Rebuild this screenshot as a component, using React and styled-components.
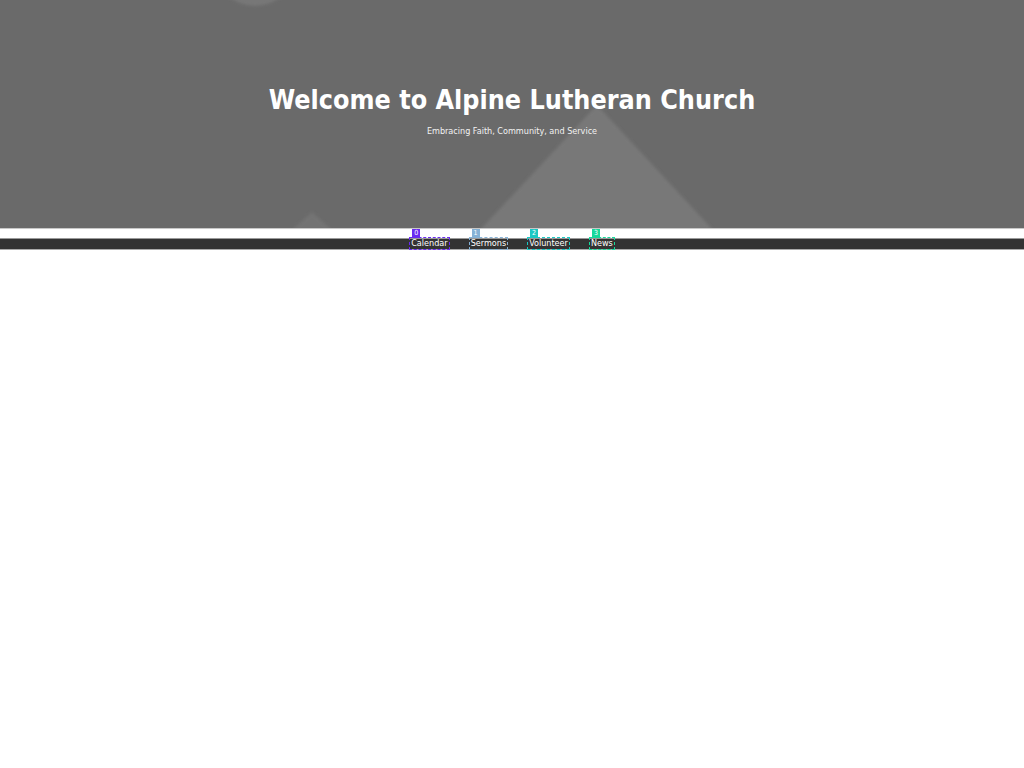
import React from "react";
import styled, { createGlobalStyle } from "styled-components";

const GlobalStyle = createGlobalStyle`
  html, body {
    margin: 0;
    padding: 0;
    background: #fff;
    font-family: "DejaVu Sans Condensed", "DejaVu Sans", sans-serif;
  }
`;

const Hero = styled.header`
  position: relative;
  height: 228px;
  background: #6a6a6a;
  overflow: hidden;
  display: flex;
  flex-direction: column;
  align-items: center;
  color: #fff;
`;

const HeroArt = styled.svg`
  position: absolute;
  inset: 0;
  width: 100%;
  height: 100%;
`;

const Title = styled.h1`
  position: relative;
  margin: 84px 0 0;
  font-size: 26.7px;
  font-weight: bold;
  line-height: 32px;
  font-stretch: condensed;
`;

const Subtitle = styled.p`
  position: relative;
  margin: 9px 0 0;
  font-size: 9px;
  line-height: 12px;
  color: #f2f2f2;
  font-stretch: condensed;
`;

const Spacer = styled.div`
  height: 9px;
  border-top: 1px solid #c8c8c8;
  background: #fff;
`;

const NavBar = styled.nav`
  height: 10px;
  background: #333;
  border-top: 1px solid #999;
  border-bottom: 1px solid #aaa;
  display: flex;
  justify-content: center;
  gap: 21px;
`;

const NavLink = styled.a`
  position: relative;
  display: block;
  height: 11px;
  padding: 0 1px;
  margin-top: -1px;
  color: #fff;
  text-decoration: none;
  font-size: 9px;
  line-height: 11px;
  font-stretch: condensed;
  outline: 1px dashed ${(p) => p.$mark};
`;

const Badge = styled.span`
  position: absolute;
  left: 2px;
  top: -9px;
  width: 8px;
  height: 9px;
  background: ${(p) => p.$mark};
  color: #fff;
  font-size: 7px;
  line-height: 9px;
  text-align: center;
`;

const links = [
  { label: "Calendar", mark: "#6a2cf0" },
  { label: "Sermons", mark: "#86b2d6" },
  { label: "Volunteer", mark: "#19c8c4" },
  { label: "News", mark: "#16d99c" },
];

export default function App() {
  return (
    <>
      <GlobalStyle />
      <Hero>
        <HeroArt viewBox="0 0 1024 228" preserveAspectRatio="none">
          <defs>
            <filter id="soft" x="-10%" y="-10%" width="120%" height="120%">
              <feGaussianBlur stdDeviation="1.5" />
            </filter>
          </defs>
          <circle cx="255" cy="-36" r="42" fill="#777" filter="url(#soft)" />
          <polygon points="597,105 713,230 480,230" fill="#787878" filter="url(#soft)" />
          <polygon points="312,212 332,230 292,230" fill="#737373" filter="url(#soft)" />
        </HeroArt>
        <Title>Welcome to Alpine Lutheran Church</Title>
        <Subtitle>Embracing Faith, Community, and Service</Subtitle>
      </Hero>
      <Spacer />
      <NavBar>
        {links.map((l, i) => (
          <NavLink key={l.label} href="#" $mark={l.mark}>
            <Badge $mark={l.mark}>{i}</Badge>
            {l.label}
          </NavLink>
        ))}
      </NavBar>
    </>
  );
}
